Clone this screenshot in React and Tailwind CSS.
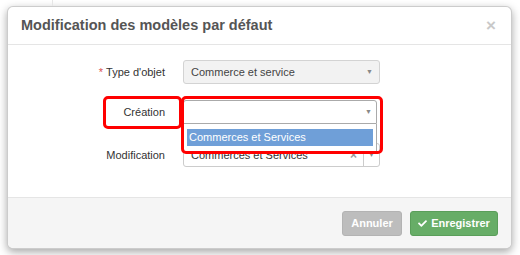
import { FaCheck } from 'react-icons/fa';

const App = () => {
  return (
    <div className="relative w-[520px] h-[255px] bg-white overflow-hidden font-['Liberation_Sans',Arial,sans-serif]">
      {/* page behind the modal */}
      <div className="absolute left-[52px] top-0 h-[6px] border-l border-[#e6e6e6]" />

      <div className="pt-[6px] pl-[7px]">
        <div className="w-[505px] h-[243px] bg-white rounded-[6px] border border-black/20 shadow-[0_3px_9px_rgba(0,0,0,0.35)] flex flex-col overflow-hidden">
          {/* header */}
          <div className="h-[38px] shrink-0 border-b border-[#e5e5e5] flex items-center justify-between pl-[13px] pr-[15px]">
            <h4 className="text-[14.5px] font-bold text-[#555]">Modification des modèles par défaut</h4>
            <span className="text-[17px] font-bold leading-none text-[#c9c9c9]">×</span>
          </div>

          {/* body */}
          <div className="flex-1 pt-[15px] text-[11px] text-[#333]">
            <div className="flex items-center h-[24px]">
              <label className="w-[157px] text-right">
                <span className="text-[#d9534f] mr-[3px]">*</span>Type d'objet
              </label>
              <div className="ml-[18px] w-[197px] h-[24px] rounded-[3px] border border-[#d3d3d3] bg-[#f2f2f2] flex items-center justify-between pl-[7px] pr-[6px]">
                <span className="text-[#444]">Commerce et service</span>
                <span className="text-[7px] text-[#888]">▼</span>
              </div>
            </div>

            <div className="flex items-center h-[24px] mt-[16px]">
              <label className="w-[157px] text-right">Création</label>
              <div className="ml-[18px] w-[194px] h-[24px] rounded-t-[3px] border border-[#aaa] bg-white flex items-center justify-end pr-[4px]">
                <span className="text-[7px] text-[#888]">▼</span>
              </div>
            </div>

            <div className="flex items-center h-[24px] mt-[19px]">
              <label className="w-[157px] text-right">Modification</label>
              <div className="ml-[18px] w-[197px] h-[24px] rounded-[3px] border border-[#ccc] bg-white flex items-center">
                <span className="flex-1 pl-[7px] text-[#333]">Commerces et Services</span>
                <span className="text-[12px] font-bold text-[#999] px-[6px]">×</span>
                <span className="h-full border-l border-[#ccc] w-[16px] flex items-center justify-center text-[7px] text-[#888]">▼</span>
              </div>
            </div>
          </div>

          {/* footer */}
          <div className="h-[51px] shrink-0 bg-[#f5f5f5] border-t border-[#e5e5e5] flex items-center justify-end gap-[8px] pr-[13px]">
            <button className="h-[25px] w-[60px] rounded-[3px] bg-[#bdbdbd] border border-[#b3b3b3] text-white text-[11px] font-bold">
              Annuler
            </button>
            <button className="h-[25px] w-[88px] rounded-[3px] bg-[#67ad67] border border-[#5a9e5a] text-white text-[11px] font-bold flex items-center justify-center gap-[4px]">
              <FaCheck size={9} />
              Enregistrer
            </button>
          </div>
        </div>
      </div>

      {/* open dropdown of "Création" */}
      <div className="absolute left-[183px] top-[124px] w-[194px] h-[28px] bg-white border border-[#aaa] border-t-0 px-[3px] pt-[5px]">
        <div className="h-[17px] bg-[#6f9fd8] text-white text-[11px] flex items-center pl-[2px]">Commerces et Services</div>
      </div>

      {/* red annotations */}
      <div className="absolute left-[103px] top-[96px] w-[79px] h-[33px] rounded-[5px] border-[3px] border-[#ff0000]" />
      <div className="absolute left-[181px] top-[96px] w-[202px] h-[58px] rounded-[5px] border-[3px] border-[#ff0000]" />
    </div>
  );
};

export default App;
